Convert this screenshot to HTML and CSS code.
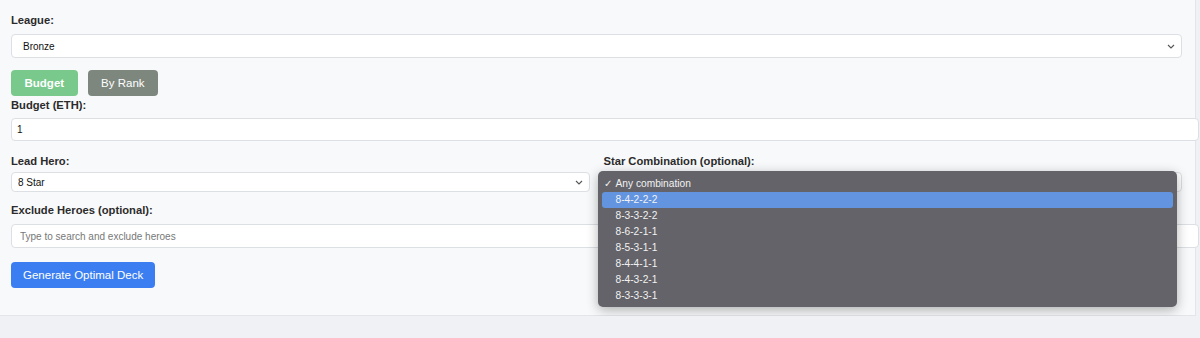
FILE: index.html
```html
<!DOCTYPE html>
<html lang="en">
<head>
  <meta charset="UTF-8" />
  <meta name="viewport" content="width=device-width, initial-scale=1.0" />
  <title>Deck Builder</title>
  <link rel="stylesheet" href="styles.css">
</head>
<body>
  <div class="card">
    <label class="label">League:</label>
    <div class="select-wrap">
      <select class="select league">
        <option>Bronze</option>
        <option>Silver</option>
        <option>Gold</option>
      </select>
      <svg class="chev" width="8" height="5" viewBox="0 0 8 5"><path d="M1 1l3 3 3-3" fill="none" stroke="#555" stroke-width="1.1"/></svg>
    </div>

    <div class="mode">
      <button class="btn btn-green">Budget</button>
      <button class="btn btn-grey">By Rank</button>
    </div>

    <label class="label label-tight">Budget (ETH):</label>
    <input type="text" class="input" value="1" />

    <div class="cols">
      <div class="col">
        <label class="label">Lead Hero:</label>
        <div class="select-wrap">
          <select class="select small">
            <option>8 Star</option>
          </select>
          <svg class="chev" width="8" height="5" viewBox="0 0 8 5"><path d="M1 1l3 3 3-3" fill="none" stroke="#555" stroke-width="1.1"/></svg>
        </div>
      </div>
      <div class="col col-star">
        <label class="label">Star Combination (optional):</label>
        <div class="select-wrap">
          <select class="select small">
            <option>Any combination</option>
          </select>
          <svg class="chev" width="8" height="5" viewBox="0 0 8 5"><path d="M1 1l3 3 3-3" fill="none" stroke="#555" stroke-width="1.1"/></svg>
        </div>
        <div class="popup">
          <div class="opt"><span class="check">✓</span>Any combination</div>
          <div class="opt active">8-4-2-2-2</div>
          <div class="opt">8-3-3-2-2</div>
          <div class="opt">8-6-2-1-1</div>
          <div class="opt">8-5-3-1-1</div>
          <div class="opt">8-4-4-1-1</div>
          <div class="opt">8-4-3-2-1</div>
          <div class="opt">8-3-3-3-1</div>
        </div>
      </div>
    </div>

    <label class="label">Exclude Heroes (optional):</label>
    <input type="text" class="input input-tall" placeholder="Type to search and exclude heroes" />

    <button class="btn btn-blue">Generate Optimal Deck</button>
  </div>
</body>
</html>
```

FILE: styles.css
```css
body {
  margin: 0;
  font-family: 'Liberation Sans', Arial, sans-serif;
  background: #f0f1f4;
  color: #222;
}
.card {
  width: 1171px;
  padding: 13px 13px 27px 11px;
  background: #f8f9fa;
  border-right: 1px solid #e3e5e8;
  border-bottom: 1px solid #e3e5e8;
}
.label {
  display: block;
  font-size: 11.2px;
  font-weight: bold;
  color: #2b2b2b;
  line-height: 14px;
  margin-bottom: 7px;
}
.label-tight {
  margin-bottom: 6px;
}
.select-wrap {
  position: relative;
}
.select {
  display: block;
  width: 100%;
  appearance: none;
  font-family: inherit;
  font-size: 10px;
  color: #111;
  background: #fff;
  border: 1px solid #dcdfe3;
  border-radius: 4px;
}
.chev {
  position: absolute;
  right: 7px;
  top: 50%;
  margin-top: -2px;
}
.league {
  height: 24px;
  padding: 0 11px;
}
.small {
  height: 20px;
  padding: 0 6px;
}
.mode {
  display: flex;
  gap: 10px;
  margin: 12px 0 2px;
}
.btn {
  font-family: inherit;
  font-size: 11.5px;
  color: #fff;
  border: none;
  border-radius: 4px;
  height: 26px;
  padding: 0 13.5px;
  cursor: pointer;
}
.btn-green {
  background: #78c98b;
  font-weight: bold;
}
.btn-grey {
  background: #7d877e;
}
.btn-blue {
  display: block;
  background: #3a7ef2;
  padding: 0 12px;
  margin-top: 14px;
}
.input {
  display: block;
  width: 100%;
  height: 21px;
  padding: 0 10px 0 5px;
  font-family: inherit;
  font-size: 10px;
  color: #111;
  background: #fff;
  border: 1px solid #dcdfe3;
  border-radius: 4px;
}
.input-tall {
  height: 22px;
  padding-left: 8px;
  padding-right: 7px;
}
.input::placeholder {
  color: #777;
}
.cols {
  display: grid;
  grid-template-columns: 1fr 1fr;
  gap: 14px;
  margin: 13px 0 11px;
}
.cols .label {
  margin-bottom: 4px;
}
.col-star {
  position: relative;
}
.popup {
  position: absolute;
  left: -6px;
  top: 17px;
  width: 571px;
  padding: 5px 4px 3px;
  background: #636369;
  border-radius: 5px;
  box-shadow: 0 3px 12px rgba(0, 0, 0, 0.3);
}
.opt {
  height: 16px;
  line-height: 16px;
  padding-left: 14px;
  font-size: 10.2px;
  color: #f2f2f2;
  border-radius: 3px;
  position: relative;
}
.opt.active {
  background: #6394e0;
}
.check {
  position: absolute;
  left: 2px;
}
```
